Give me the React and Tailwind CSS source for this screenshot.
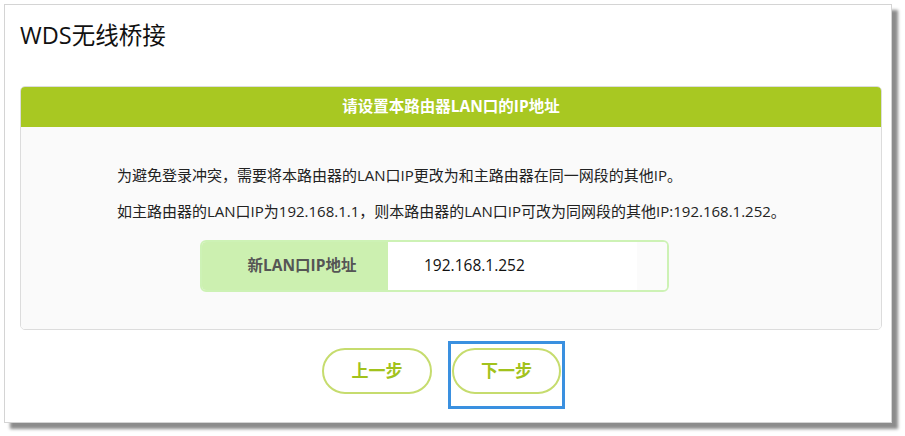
export default function App() {
  return (
    <div className="w-[905px] h-[436px] bg-white pt-[4px] pl-[4px]" style={{ fontFamily: '"Open Sans", "Noto Sans CJK SC", sans-serif' }}>
      <div className="w-[888px] h-[419px] bg-white border border-[#d4d4d4] shadow-[6px_6px_3px_rgba(0,0,0,0.45)] px-[15px] pt-[14px]">
        <h1 className="text-[23.5px] leading-[32px] text-[#111] font-normal">WDS无线桥接</h1>

        <div className="mt-[35px] w-[862px] rounded-[5px] border border-[#dcdcdc] overflow-hidden">
          <div className="h-[41px] bg-[#a8c822] flex items-center justify-center text-white text-[15.5px] font-bold -mt-px -mx-px">
            请设置本路由器LAN口的IP地址
          </div>
          <div className="h-[202px] bg-[#fafafa] pt-[38px]">
            <div className="pl-[96px] text-[15px] text-[#222]">
              <p className="leading-[20px]">为避免登录冲突，需要将本路由器的LAN口IP更改为和主路由器在同一网段的其他IP。</p>
              <p className="leading-[20px] mt-[16px]">如主路由器的LAN口IP为192.168.1.1，则本路由器的LAN口IP可改为同网段的其他IP:192.168.1.252。</p>
            </div>
            <div className="mt-[19px] ml-[179px] w-[469px] h-[52px] rounded-[6px] border-2 border-[#cdf2b5] flex overflow-hidden">
              <div className="w-[186px] bg-[#ccf0b0] flex items-center justify-center pl-[14px] text-[15.5px] font-bold text-[#555]">新LAN口IP地址</div>
              <div className="flex-1 bg-white flex items-center pl-[36px] text-[15.5px] text-[#111]">192.168.1.252</div>
              <div className="w-[30px] bg-[#fbfbfb]"></div>
            </div>
          </div>
        </div>

        <div className="mt-[11px] ml-[302px] flex items-start gap-[16px]">
          <button className="mt-[7px] w-[110px] h-[46px] rounded-full border-2 border-[#c6dc6e] bg-white text-[#a2c21c] text-[17px] font-bold">上一步</button>
          <div className="pt-[4px] pb-[12px] px-[1px] border-[3px] border-[#3a90e0]">
            <button className="w-[109px] h-[46px] rounded-full border-2 border-[#c6dc6e] bg-white text-[#a2c21c] text-[17px] font-bold">下一步</button>
          </div>
        </div>
      </div>
    </div>
  );
}
